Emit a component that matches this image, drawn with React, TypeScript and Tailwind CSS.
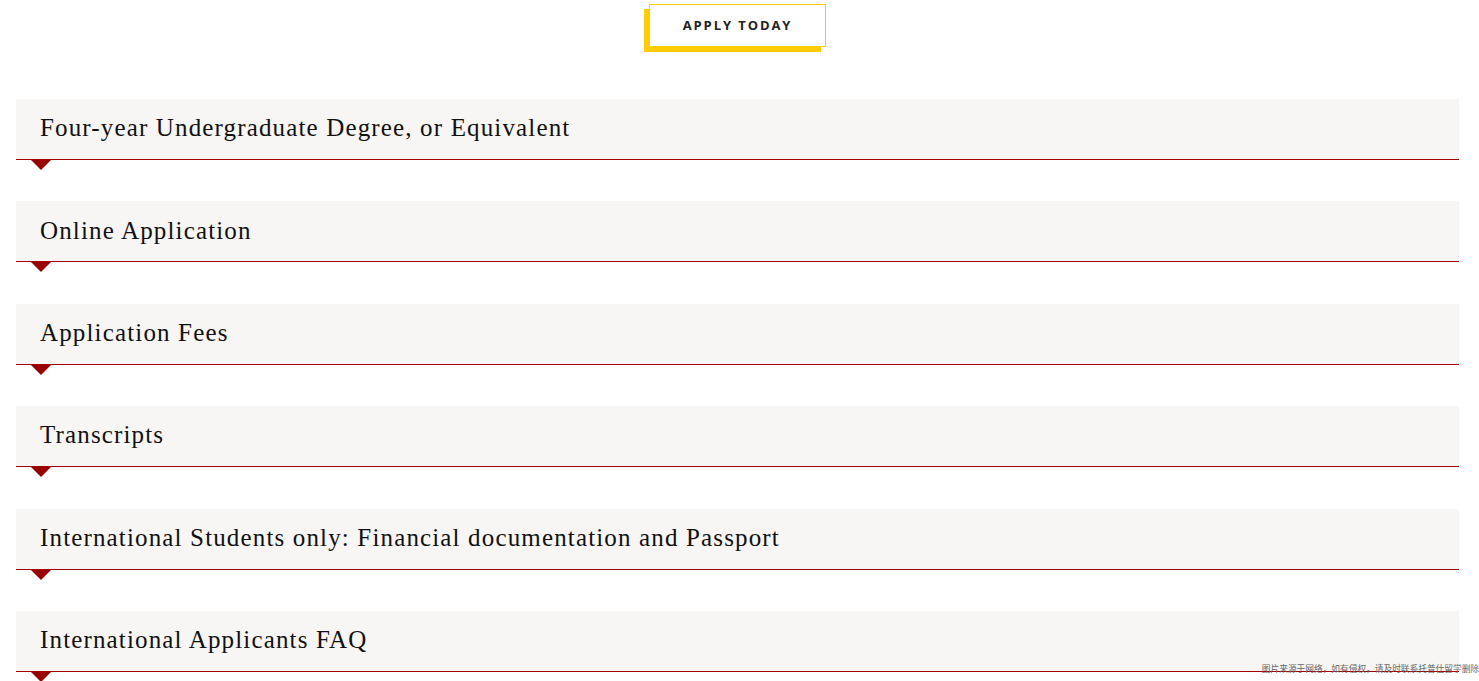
import React from "react";

const items = [
  "Four-year Undergraduate Degree, or Equivalent",
  "Online Application",
  "Application Fees",
  "Transcripts",
  "International Students only: Financial documentation and Passport",
  "International Applicants FAQ",
];

export default function App() {
  return (
    <div className="relative min-h-screen bg-white overflow-hidden">
      {/* Apply button */}
      <div className="flex justify-center pt-[4px] pr-[4px]">
        <a
          href="#"
          className="flex items-center justify-center w-[177px] h-[43px] bg-white border border-[#ffcc00] shadow-[-5px_5px_0_#ffcc00] text-[13px] font-bold tracking-[1.9px] text-[#222] font-['Open_Sans',sans-serif]"
        >
          APPLY TODAY
        </a>
      </div>

      {/* Accordion */}
      <div className="mt-[52px] ml-[16px] mr-[20px] flex flex-col gap-[31.4px]">
        {items.map((title) => (
          <div key={title} className="flex flex-col">
            <button className="w-full h-[61px] flex items-center bg-[#f7f6f4] border-b border-[#a30000] px-[24px] pb-[2px] text-left">
              <span className="text-[25px] tracking-[1.15px] text-[#111] font-['Liberation_Serif',serif]">
                {title}
              </span>
            </button>
            <span className="ml-[15px] w-0 h-0 border-l-[10px] border-r-[10px] border-t-[10px] border-l-transparent border-r-transparent border-t-[#990000]" />
          </div>
        ))}
      </div>

      {/* Watermark */}
      <div className="absolute right-0 top-[663px] text-[8.7px] leading-[12px] text-[#666] font-['Noto_Sans_CJK_SC',sans-serif] whitespace-nowrap">
        图片来源于网络，如有侵权，请及时联系托普仕留学删除
      </div>
    </div>
  );
}
